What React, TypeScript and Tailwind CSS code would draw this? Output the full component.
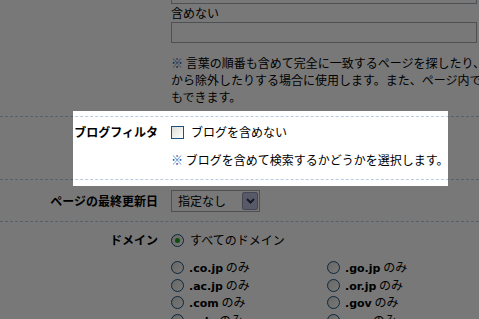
import React from "react";

const rowCls =
  "grid grid-cols-[158px_1fr] gap-x-[13px] border-b border-dashed border-[#b8cde4]";

function Checkbox() {
  return (
    <span className="inline-block h-[13px] w-[13px] shrink-0 border border-[#1c5180] bg-linear-to-br from-[#dcdcd7] to-white" />
  );
}

function Radio({ checked = false }: { checked?: boolean }) {
  return (
    <span className="flex h-[13px] w-[13px] shrink-0 items-center justify-center rounded-full border border-[#1c5180] bg-linear-to-br from-[#dcdcd7] to-white">
      {checked && <span className="h-[5px] w-[5px] rounded-full bg-[#21a121]" />}
    </span>
  );
}

const domains = [".co.jp", ".go.jp", ".ac.jp", ".or.jp", ".com", ".gov", ".edu", ".org"];

export default function App() {
  return (
    <div className="relative h-[319px] w-[479px] overflow-hidden bg-white font-['Noto_Sans_CJK_JP',sans-serif] text-[12px] text-black">
      {/* 含めない row (scrolled partly out of view) */}
      <div className={`${rowCls} -mt-[17px] pb-[11px]`}>
        <div />
        <div>
          <div className="box-border h-[21px] w-[306px] border border-[#a5acb2]" />
          <div className="leading-[18px]">含めない</div>
          <div className="box-border h-[21px] w-[306px] border border-[#a5acb2]" />
          <div className="mt-[11px] whitespace-nowrap leading-[17px]">
            <div>
              <span className="text-[#1a5fb4]">※</span> 言葉の順番も含めて完全に一致するページを探したり、特定の言葉を含むページを検索結果
            </div>
            <div>から除外したりする場合に使用します。また、ページ内で検索する範囲を指定すること</div>
            <div>もできます。</div>
          </div>
        </div>
      </div>

      {/* ブログフィルタ */}
      <div className={`${rowCls} pt-[6px] pb-[10px]`}>
        <div className="text-right font-bold leading-[18px]">ブログフィルタ</div>
        <div>
          <div className="flex h-[18px] items-center gap-[7px]">
            <Checkbox />
            <span>ブログを含めない</span>
          </div>
          <div className="mt-[10px] whitespace-nowrap leading-[18px]">
            <span className="text-[#1a5fb4]">※</span> ブログを含めて検索するかどうかを選択します。
          </div>
        </div>
      </div>

      {/* ページの最終更新日 */}
      <div className={`${rowCls} items-center pt-[10px] pb-[9px]`}>
        <div className="text-right font-bold leading-[18px]">ページの最終更新日</div>
        <div>
          <div className="box-border flex h-[22px] w-[89px] items-center justify-between border border-[#a5acb2] pl-[6px] pr-px">
            <span>指定なし</span>
            <span className="flex h-[18px] w-[16px] items-center justify-center rounded-[2px] border border-[#8e94b0] bg-[#bcc2dc]">
              <svg width="9" height="6" viewBox="0 0 9 6">
                <polyline points="1,1 4.5,4.5 8,1" fill="none" stroke="#2a3550" strokeWidth="2" />
              </svg>
            </span>
          </div>
        </div>
      </div>

      {/* ドメイン */}
      <div className="grid grid-cols-[158px_1fr] gap-x-[13px] pt-[9px]">
        <div className="text-right font-bold leading-[18px]">ドメイン</div>
        <div>
          <div className="flex h-[18px] items-center gap-[6px]">
            <Radio checked />
            <span>すべてのドメイン</span>
          </div>
          <div className="mt-[10px] grid grid-cols-[156px_156px]">
            {domains.map((d) => (
              <div key={d} className="flex h-[17.5px] items-center gap-[5px] whitespace-nowrap">
                <Radio />
                <span>
                  <span className="font-['DejaVu_Sans',sans-serif] text-[11px] font-bold">{d}</span> のみ
                </span>
              </div>
            ))}
          </div>
        </div>
      </div>

      {/* spotlight overlay */}
      <div className="pointer-events-none absolute left-[73px] top-[111px] h-[75px] w-[375px] shadow-[0_0_0_2000px_rgba(0,0,0,0.53)]" />
    </div>
  );
}
